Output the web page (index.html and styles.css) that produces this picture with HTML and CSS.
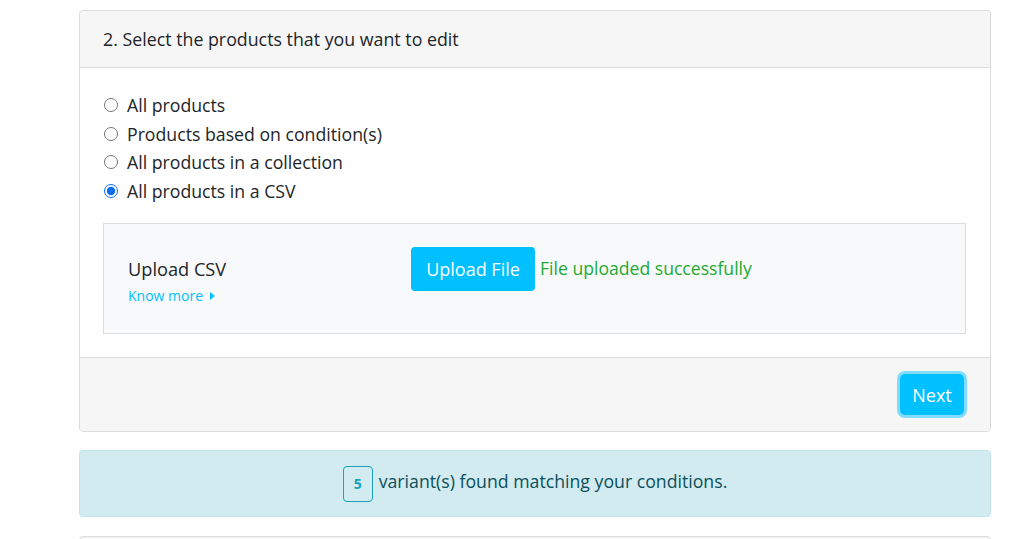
FILE: index.html
```html
<!DOCTYPE html>
<html>
<head>
<meta charset="utf-8">
<link rel="stylesheet" href="styles.css">
</head>
<body>
<div class="page">
  <div class="card">
    <div class="card-header">2. Select the products that you want to edit</div>
    <div class="card-body">
      <div class="radios">
        <label class="radio"><input type="radio" name="sel"> All products</label>
        <label class="radio"><input type="radio" name="sel"> Products based on condition(s)</label>
        <label class="radio"><input type="radio" name="sel"> All products in a collection</label>
        <label class="radio"><input type="radio" name="sel" checked> All products in a CSV</label>
      </div>
      <div class="upload-box">
        <div class="upload-label">
          <div class="upload-title">Upload CSV</div>
          <a class="know-more">Know more <span class="caret"></span></a>
        </div>
        <div class="upload-action">
          <button class="btn btn-upload">Upload File</button>
          <span class="success">File uploaded successfully</span>
        </div>
      </div>
    </div>
    <div class="card-footer">
      <button class="btn btn-next">Next</button>
    </div>
  </div>
  <div class="alert">
    <span class="badge">5</span>
    <span class="alert-text">variant(s) found matching your conditions.</span>
  </div>
  <div class="card next-card"></div>
</div>
</body>
</html>
```

FILE: styles.css
```css
* { box-sizing: border-box; }
html, body { margin: 0; padding: 0; background: #fff; }
body {
  font-family: "Open Sans", "Noto Sans", sans-serif;
  color: #212529;
  font-size: 17.7px;
}
.page {
  width: 912px;
  margin-left: 79px;
  padding-top: 10px;
}
.card {
  border: 1px solid #dcdcdc;
  border-radius: 4px;
  background: #fff;
}
.card-header {
  background: #f6f6f6;
  border-bottom: 1px solid #dcdcdc;
  height: 57px;
  padding: 0 23px;
  display: flex;
  align-items: center;
  font-size: 17.8px;
  border-radius: 4px 4px 0 0;
}
.card-body {
  padding: 23px 24px 23px 23px;
}
.radios {
  display: flex;
  flex-direction: column;
}
.radio {
  display: flex;
  align-items: center;
  height: 28.5px;
  font-size: 17.7px;
}
.radio input {
  width: 14px;
  height: 14px;
  margin: 0 9px 0 1px;
  accent-color: #0b6cf0;
}
.upload-box {
  margin-top: 18px;
  background: #f8f9fa;
  border: 1px solid #dcdcdc;
  height: 111px;
  display: flex;
  align-items: flex-start;
  padding: 23px 24px 0;
}
.upload-label {
  width: 283px;
  padding-top: 9px;
}
.upload-title {
  font-size: 18.2px;
  line-height: 26px;
}
.know-more {
  color: #00bfff;
  font-size: 14px;
  line-height: 24px;
  display: inline-flex;
  align-items: center;
}
.caret {
  display: inline-block;
  width: 0; height: 0;
  border-top: 4.5px solid transparent;
  border-bottom: 4.5px solid transparent;
  border-left: 5px solid #00bfff;
  margin-left: 7px;
}
.upload-action {
  display: flex;
  align-items: flex-start;
  gap: 5px;
}
.btn {
  border: none;
  border-radius: 4px;
  background: #00c0ff;
  color: #fff;
  font-family: "Open Sans", "Noto Sans", sans-serif;
  font-size: 18px;
  cursor: pointer;
}
.btn-upload {
  width: 124px;
  height: 44px;
  padding: 0;
}
.success {
  color: #22aa33;
  font-size: 17.6px;
  line-height: 42px;
}
.card-footer {
  background: #f6f6f6;
  border-top: 1px solid #dcdcdc;
  height: 74px;
  display: flex;
  align-items: center;
  justify-content: flex-end;
  padding: 0 26px;
  border-radius: 0 0 4px 4px;
}
.btn-next {
  width: 64px;
  height: 41px;
  border-radius: 5px;
  box-shadow: 0 0 0 3px #80dcff;
  padding: 0;
}
.alert {
  margin-top: 18px;
  height: 67px;
  background: #d1ebf0;
  border: 1px solid #bfe5eb;
  border-radius: 4px;
  display: flex;
  align-items: center;
  justify-content: center;
  gap: 6px;
  color: #0c4f5c;
  font-size: 17.7px;
}
.alert-text {
  padding-bottom: 5px;
}
.badge {
  display: inline-flex;
  align-items: center;
  justify-content: center;
  width: 30px;
  height: 36px;
  border: 1px solid #17a2b8;
  border-radius: 4px;
  color: #17a2b8;
  font-weight: 700;
  font-size: 14px;
}
.next-card {
  margin-top: 19px;
  height: 20px;
  background: #f6f6f6;
}
```
